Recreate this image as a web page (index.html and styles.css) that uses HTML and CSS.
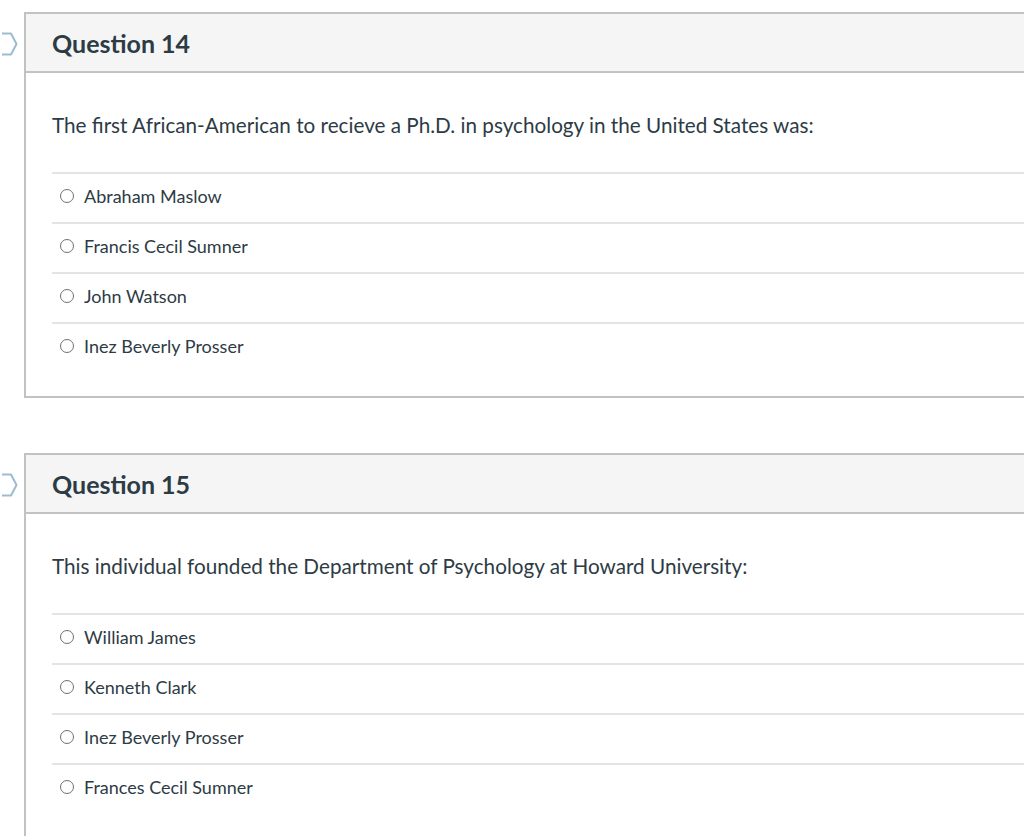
FILE: index.html
```html
<!DOCTYPE html>
<html>
<head>
<meta charset="utf-8">
<link rel="stylesheet" href="styles.css">
</head>
<body>
<div class="page">
  <section class="question q14">
    <svg class="flag" width="16" height="24" viewBox="0 0 16 24"><path d="M-4 1.5 H9 L14.5 12 L9 22.5 H-4" fill="none" stroke="#9dbcd2" stroke-width="2" stroke-linejoin="round"/></svg>
    <header class="q-header"><h2>Question 14</h2></header>
    <div class="q-body">
      <p class="q-text">The first African-American to recieve a Ph.D. in psychology in the United States was:</p>
      <ul class="answers">
        <li><span class="radio"></span>Abraham Maslow</li>
        <li><span class="radio"></span>Francis Cecil Sumner</li>
        <li><span class="radio"></span>John Watson</li>
        <li><span class="radio"></span>Inez Beverly Prosser</li>
      </ul>
    </div>
  </section>
  <section class="question q15">
    <svg class="flag" width="16" height="24" viewBox="0 0 16 24"><path d="M-4 1.5 H9 L14.5 12 L9 22.5 H-4" fill="none" stroke="#9dbcd2" stroke-width="2" stroke-linejoin="round"/></svg>
    <header class="q-header"><h2>Question 15</h2></header>
    <div class="q-body">
      <p class="q-text">This individual founded the Department of Psychology at Howard University:</p>
      <ul class="answers">
        <li><span class="radio"></span>William James</li>
        <li><span class="radio"></span>Kenneth Clark</li>
        <li><span class="radio"></span>Inez Beverly Prosser</li>
        <li><span class="radio"></span>Frances Cecil Sumner</li>
      </ul>
    </div>
  </section>
</div>
</body>
</html>
```

FILE: styles.css
```css
html, body {
  margin: 0;
  padding: 0;
  overflow: hidden;
  background: #ffffff;
}
body {
  font-family: Lato, "Open Sans", sans-serif;
  color: #2d3b45;
  width: 1024px;
  height: 836px;
}
.page {
  padding-top: 12px;
  padding-left: 24px;
}
.question {
  position: relative;
  width: 1100px;
  border: 2px solid #c2c2c2;
  border-right: none;
  box-sizing: border-box;
}
.q14 {
  margin-bottom: 55px;
}
.flag {
  position: absolute;
  left: -24px;
  top: 18px;
}
.q-header {
  background: #f5f5f5;
  border-bottom: 2px solid #c2c2c2;
  height: 57px;
  display: flex;
  align-items: center;
  padding-left: 26px;
}
.q-header h2 {
  margin: 0;
  font-size: 25px;
  font-weight: 700;
  letter-spacing: 0;
}
.q-body {
  padding: 38px 0 24px 26px;
}
.q-text {
  margin: 0 0 33px 0;
  font-size: 20.7px;
  line-height: 28px;
}
.answers {
  list-style: none;
  margin: 0;
  padding: 0;
}
.answers li {
  border-top: 2px solid #e4e4e4;
  height: 48px;
  box-sizing: border-box;
  height: 50px;
  padding-bottom: 5px;
  display: flex;
  align-items: center;
  font-size: 18px;
  padding-left: 8px;
}
.radio {
  width: 12px;
  height: 12px;
  border: 1.5px solid #707070;
  border-radius: 50%;
  margin-right: 10px;
  box-sizing: content-box;
  flex: none;
}
```
